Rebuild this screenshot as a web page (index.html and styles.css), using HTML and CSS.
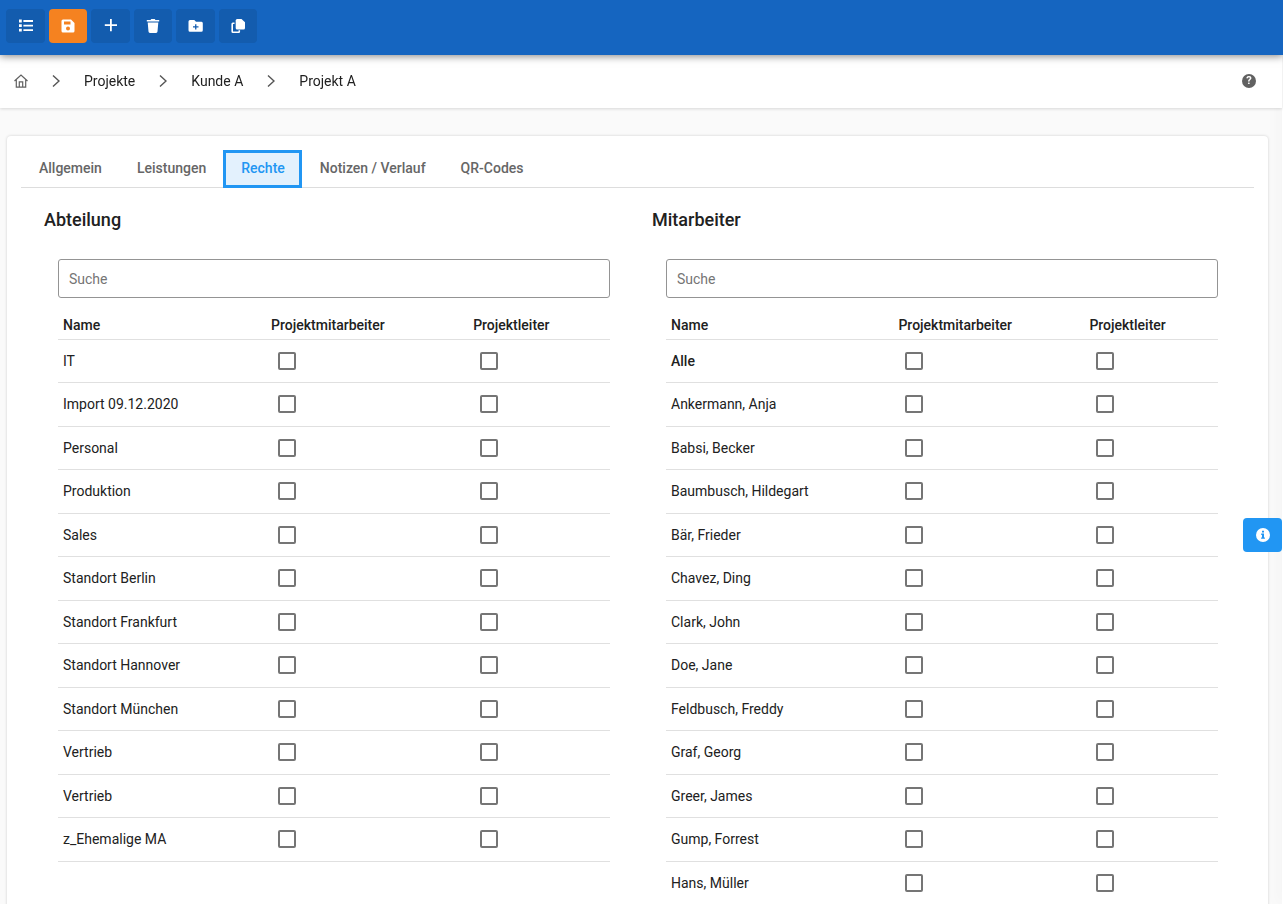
FILE: index.html
```html
<!DOCTYPE html>
<html lang="de">
<head>
<meta charset="utf-8">
<meta name="viewport" content="width=device-width, initial-scale=1">
<title>Projekt A – Rechte</title>
<link rel="stylesheet" href="styles.css">
</head>
<body>
<header class="toolbar">
  <button class="tool" type="button" aria-label="Liste"><svg viewBox="0 0 16 16"><path d="M1 1.600h2.800v2.800H1zM1 6.200h2.800V9H1zM1 10.800h2.800v2.800H1zM5.400 2.100H15v1.800H5.400zM5.400 6.700H15v1.800H5.400zM5.400 11.300H15v1.800H5.400z"/></svg></button>
  <button class="tool tool-save" type="button" aria-label="Speichern"><svg viewBox="0 0 16 16"><path fill-rule="evenodd" d="M3 1.500h8L14.500 5v8a1.500 1.500 0 0 1-1.500 1.500H3A1.500 1.500 0 0 1 1.500 13V3A1.500 1.500 0 0 1 3 1.500zM4 3.500v3h6.500v-3zM8 8.500a2 2 0 1 0 0 4 2 2 0 0 0 0-4z"/></svg></button>
  <button class="tool" type="button" aria-label="Neu"><svg viewBox="0 0 16 16"><path d="M7 1h1.800v5.200H14V8H8.800v5.200H7V8H1.800V6.200H7z"/></svg></button>
  <button class="tool" type="button" aria-label="Löschen"><svg viewBox="0 0 16 16"><path d="M1.800 2h3.700l.8-1h3.400l.8 1h3.700v1.600H1.800zM2.700 4.600h10.600l-.8 9a1.500 1.500 0 0 1-1.500 1.400H5a1.500 1.500 0 0 1-1.500-1.400z"/></svg></button>
  <button class="tool" type="button" aria-label="Ordner hinzufügen"><svg viewBox="0 0 16 16"><path fill-rule="evenodd" d="M2 2h4.300L8 3.800h5A1.500 1.500 0 0 1 14.800 5.300v7A1.500 1.500 0 0 1 13.300 13.800H2A1.500 1.500 0 0 1 .5 12.300V3.500A1.500 1.500 0 0 1 2 2zM7.100 6.200v2H5v1.300h2.100v2h1.300v-2h2.100V8.200H8.400v-2z"/></svg></button>
  <button class="tool" type="button" aria-label="Kopieren"><svg viewBox="0 0 16 16"><path d="M7.200 1h4.300L15 4.300v5.700a1.500 1.500 0 0 1-1.500 1.500H7.200a1.500 1.500 0 0 1-1.500-1.500v-7.500A1.500 1.500 0 0 1 7.200 1z"/><path d="M3 4.500h1.500v1.600H3v7.300h5.500V12.300h1.600v1.200A1.500 1.500 0 0 1 8.600 15H2.900a1.500 1.500 0 0 1-1.500-1.500V6A1.500 1.500 0 0 1 3 4.500z"/></svg></button>
</header>

<div class="crumb-bar">
  <nav class="crumbs" aria-label="Pfad">
    <a class="crumb-home" href="#" aria-label="Startseite"><svg viewBox="0 0 14 14"><path d="M.5 7 7 1l6.500 6M2.300 5.800v7.400h9.400V5.800M5.300 13V7.800h3.400V13"/></svg></a>
    <svg class="chevron" viewBox="0 0 8 14"><path d="m1 1.500 6 5.500-6 5.500"/></svg>
    <a class="crumb" href="#">Projekte</a>
    <svg class="chevron" viewBox="0 0 8 14"><path d="m1 1.500 6 5.500-6 5.500"/></svg>
    <a class="crumb" href="#">Kunde A</a>
    <svg class="chevron" viewBox="0 0 8 14"><path d="m1 1.500 6 5.500-6 5.500"/></svg>
    <a class="crumb" href="#">Projekt A</a>
  </nav>
  <button class="help" type="button" aria-label="Hilfe">?</button>
</div>

<main class="page">
  <section class="card">
    <div class="tabs" role="tablist">
      <button class="tab" role="tab" type="button">Allgemein</button>
      <button class="tab" role="tab" type="button">Leistungen</button>
      <button class="tab tab-active" role="tab" type="button" aria-selected="true">Rechte</button>
      <button class="tab" role="tab" type="button">Notizen / Verlauf</button>
      <button class="tab" role="tab" type="button">QR-Codes</button>
    </div>
    <div class="columns">
      <section class="group">
        <h2 class="group-title">Abteilung</h2>
        <input class="search" type="search" placeholder="Suche" aria-label="Abteilung suchen">
        <table class="rights">
          <colgroup><col class="dept-name"><col class="dept-member"><col></colgroup>
          <thead><tr><th scope="col">Name</th><th scope="col">Projektmitarbeiter</th><th scope="col">Projektleiter</th></tr></thead>
          <tbody id="departments"></tbody>
        </table>
      </section>
      <section class="group">
        <h2 class="group-title">Mitarbeiter</h2>
        <input class="search" type="search" placeholder="Suche" aria-label="Mitarbeiter suchen">
        <table class="rights rights-staff">
          <colgroup><col class="staff-name"><col class="staff-member"><col></colgroup>
          <thead><tr><th scope="col">Name</th><th scope="col">Projektmitarbeiter</th><th scope="col">Projektleiter</th></tr></thead>
          <tbody id="staff"></tbody>
        </table>
      </section>
    </div>
  </section>
</main>

<aside class="drawer"></aside>
<button class="info" type="button" aria-label="Information"><svg viewBox="0 0 14 14"><circle cx="7" cy="7" r="7" fill="#fff"/><path fill="#2196f3" d="M6 2.800h2v1.800H6zM5.200 5.600H8v3.900h.9v1.300H5.100V9.500H6V6.900h-.8z"/></svg></button>
<script src="app.js"></script>
</body>
</html>
```
FILE: styles.css
```css
* { box-sizing: border-box; }

body {
  margin: 0;
  height: 100vh;
  display: flex;
  flex-direction: column;
  overflow: hidden;
  background: #fafafa;
  color: #212121;
  font: 14px/20px Roboto, sans-serif;
}

button, input { font: inherit; }
button { border: 0; padding: 0; cursor: pointer; }

.toolbar {
  position: relative;
  z-index: 3;
  flex: none;
  display: flex;
  gap: 4px;
  padding: 9px 6px 12px;
  background: #1565c0;
  box-shadow: 0 1px 8px rgba(0, 0, 0, .5);
}

.tool {
  display: flex;
  align-items: center;
  justify-content: center;
  width: 39px;
  height: 34px;
  border-radius: 4px;
  background: #135cae;
}
.tool:nth-child(even) { width: 38px; }
.tool-save { background: #f58220; }
.tool svg { width: 16px; height: 16px; fill: #fff; }

.crumb-bar {
  position: relative;
  z-index: 2;
  flex: none;
  display: flex;
  align-items: center;
  justify-content: space-between;
  height: 53px;
  margin-right: 1px;
  padding: 0 26px 2px 14px;
  background: #fff;
  box-shadow: 0 1px 3px rgba(0, 0, 0, .14);
}
.crumbs { display: flex; align-items: center; gap: 24px; }
.crumb { color: #212121; text-decoration: none; }
.crumb-home { display: flex; }
.crumb-home svg { width: 14px; height: 14px; fill: none; stroke: #616161; stroke-width: 1.2; }
.chevron { width: 8px; height: 14px; fill: none; stroke: #555; stroke-width: 1.4; }
.help {
  width: 14px;
  height: 14px;
  border-radius: 50%;
  background: #616161;
  color: #fff;
  font-size: 11px;
  font-weight: 700;
  line-height: 14px;
}

.page {
  flex: 1;
  min-height: 0;
  overflow: hidden;
  padding: 28px 15px 0 7px;
}
.card {
  padding: 14px 14px 24px;
  border-radius: 4px;
  background: #fff;
  box-shadow: 0 0 3px rgba(0, 0, 0, .18);
}

.tabs {
  display: flex;
  background: linear-gradient(#ddd, #ddd) bottom / 100% 1px no-repeat;
}
.tab {
  height: 38px;
  padding: 0 14px 2px 15px;
  border: 3px solid transparent;
  background: none;
  color: #666;
  font-weight: 500;
}
.tab-active { border-color: #2196f3; background: #e3f1fd; color: #2196f3; }

.columns {
  display: grid;
  grid-template-columns: 1fr 1fr;
  gap: 28px;
  padding: 20px 22px 0 23px;
}
.group { padding: 0 14px; }
.group-title {
  margin: 0 -14px 27px;
  font-size: 18px;
  font-weight: 500;
  line-height: 24px;
}
.search {
  display: block;
  width: 100%;
  height: 39px;
  padding: 0 10px;
  border: 1px solid #949494;
  border-radius: 3px;
  background: #fff;
  color: #212121;
  appearance: none;
}
.search::placeholder { color: #757575; }

.rights {
  width: 100%;
  margin-top: 13px;
  border-collapse: separate;
  border-spacing: 0;
  table-layout: fixed;
}
.dept-name { width: 37.7%; }
.dept-member { width: 36.6%; }
.staff-name { width: 41.2%; }
.staff-member { width: 34.6%; }

.rights th, .rights td {
  padding: 0 5px;
  border-bottom: 1px solid #e0e0e0;
  text-align: left;
  white-space: nowrap;
}
.rights th { height: 29px; font-weight: 500; }
.rights td { height: 43px; }
.rights tr:nth-child(even) td { height: 44px; padding-bottom: 1px; }
.rights-staff tr:first-child td { font-weight: 500; }

.check {
  display: block;
  width: 18px;
  height: 18px;
  margin: 0 7px;
  border: 2px solid #757575;
  border-radius: 2px;
  background: #fff;
  appearance: none;
}
.check:checked { border-color: #2196f3; background: #2196f3; }

/* Closed side drawer: only its edge shows */
.drawer {
  position: fixed;
  z-index: 1;
  top: 55px;
  right: 0;
  bottom: 0;
  width: 1px;
  background: #fff;
  box-shadow: 0 0 14px rgba(0, 0, 0, .25);
}
.info {
  position: fixed;
  z-index: 4;
  top: 518px;
  right: 1px;
  display: flex;
  align-items: center;
  justify-content: center;
  width: 39px;
  height: 34px;
  border-radius: 4px;
  background: #2196f3;
}
.info svg { width: 14px; height: 14px; }
```
FILE: app.js
```js
const departments = ["IT", "Import 09.12.2020", "Personal", "Produktion", "Sales",
  "Standort Berlin", "Standort Frankfurt", "Standort Hannover", "Standort München",
  "Vertrieb", "Vertrieb", "z_Ehemalige MA"];
const staff = ["Alle", "Ankermann, Anja", "Babsi, Becker", "Baumbusch, Hildegart",
  "Bär, Frieder", "Chavez, Ding", "Clark, John", "Doe, Jane", "Feldbusch, Freddy",
  "Graf, Georg", "Greer, James", "Gump, Forrest", "Hans, Müller"];

function fill(id, names) {
  const body = document.getElementById(id);
  for (const name of names) {
    const row = body.insertRow();
    row.insertCell().textContent = name;
    for (const role of ["Projektmitarbeiter", "Projektleiter"]) {
      const box = document.createElement("input");
      box.type = "checkbox";
      box.className = "check";
      box.setAttribute("aria-label", `${name}: ${role}`);
      row.insertCell().append(box);
    }
  }
}

fill("departments", departments);
fill("staff", staff);
```
